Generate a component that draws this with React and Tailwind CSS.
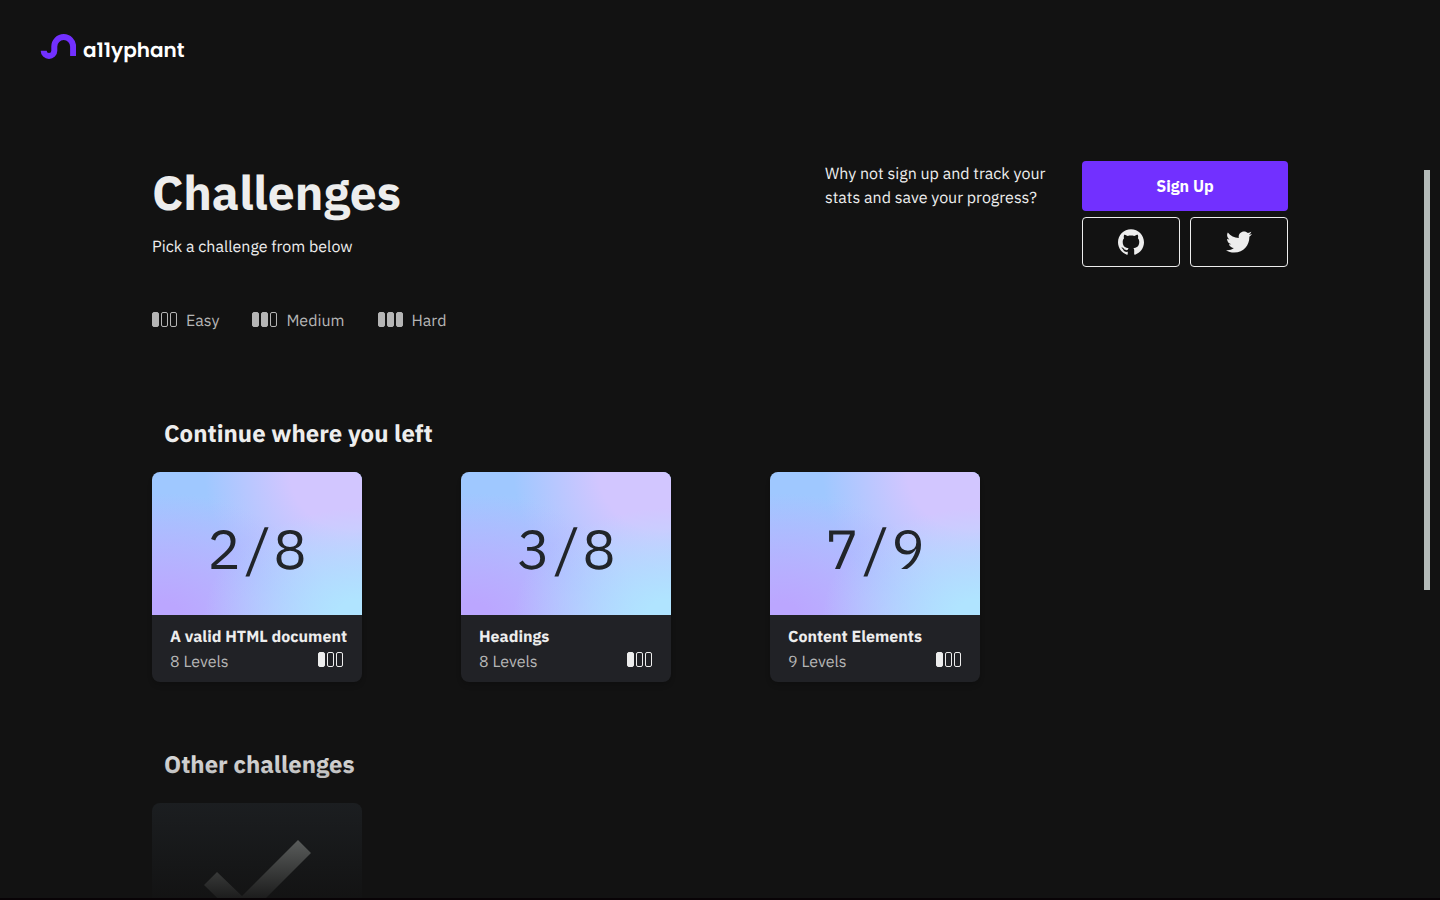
import { FaTwitter } from "react-icons/fa";
import { SiGithub } from "react-icons/si";

function Difficulty({ filled, label }) {
  return (
    <span role="img" aria-label={label} className="flex gap-0.5">
      {[0, 1, 2].map((i) => (
        <span
          key={i}
          className={
            i < filled
              ? "h-[15px] w-[7px] rounded-[2px] border border-current bg-current"
              : "h-[15px] w-[7px] rounded-[2px] border border-current"
          }
        />
      ))}
    </span>
  );
}

const legend = [
  { name: "Easy", filled: 1 },
  { name: "Medium", filled: 2 },
  { name: "Hard", filled: 3 },
];

const continued = [
  { title: "A valid HTML document", done: 2, levels: 8 },
  { title: "Headings", done: 3, levels: 8 },
  { title: "Content Elements", done: 7, levels: 9 },
];

const gradient =
  "bg-[radial-gradient(75%_75%_at_100%_100%,#b0e4ff_15%,#b0e4ff00_100%),radial-gradient(80%_85%_at_5%_100%,#bba6ff_10%,#bba6ff00_100%),radial-gradient(70%_95%_at_95%_0%,#d2c6ff_42%,#d2c6ff00_100%),linear-gradient(#9fc8ff_15%,#b5c5ff)]";

function Card({ title, done, levels }) {
  return (
    <a
      href="#challenge"
      className="flex h-[210px] flex-col overflow-hidden rounded-lg bg-[#212226] shadow-md"
    >
      <div className={`flex h-[143px] items-center justify-center pt-3 ${gradient}`}>
        <span className="font-['IBM_Plex_Mono','Liberation_Mono',monospace] text-[55px] leading-none text-[#212529]">
          {done}/{levels}
        </span>
      </div>
      <div className="px-[18px] pt-2.5">
        <h3 className="text-base leading-6 font-bold whitespace-nowrap">{title}</h3>
        <div className="flex items-center justify-between">
          <p className="text-base leading-[26px] text-[#b5b5b5]">{levels} Levels</p>
          <div className="pr-px pb-1.5">
            <Difficulty filled={1} label="Easy" />
          </div>
        </div>
      </div>
    </a>
  );
}

export default function App() {
  return (
    <div className="relative h-screen overflow-hidden bg-[#121212] font-['IBM_Plex_Sans','Noto_Sans',sans-serif] text-base text-[#ededed] antialiased [text-rendering:geometricPrecision]">
      <header className="flex h-24 items-center px-10">
        <a href="#home" className="flex items-start gap-[7px] text-white">
          <svg viewBox="0 0 36 28" className="h-7 w-9" fill="none" aria-hidden="true">
            <path
              d="M3.700 16.700a5.300 5.300 0 0 0 10.600 0v-4.200a9.400 9.400 0 0 1 18.800 0V22"
              stroke="#7230ff"
              strokeWidth="6"
            />
          </svg>
          <span className="pt-1 font-[Poppins,Outfit,Lato,sans-serif] text-[20px] leading-6 font-semibold">
            a11yphant
          </span>
        </a>
      </header>

      <main className="px-[152px] pt-[65px]">
        <div className="flex justify-between">
          <div>
            <h1 className="text-5xl leading-16 font-bold">Challenges</h1>
            <p className="mt-2.5 leading-6">Pick a challenge from below</p>
          </div>
          <div className="flex gap-[37px]">
            <p className="w-[220px] pt-px leading-6 whitespace-nowrap">
              Why not sign up and track your
              <br />
              stats and save your progress?
            </p>
            <div className="grid w-[206px] grid-cols-2 gap-x-2.5 gap-y-1.5">
              <button className="col-span-2 h-[50px] rounded bg-[#7230ff] font-bold text-white">
                Sign Up
              </button>
              <button
                aria-label="Sign up with GitHub"
                className="flex h-[50px] items-center justify-center rounded border border-[#ededed]"
              >
                <SiGithub size={26} />
              </button>
              <button
                aria-label="Sign up with Twitter"
                className="flex h-[50px] items-center justify-center rounded border border-[#ededed]"
              >
                <FaTwitter size={26} />
              </button>
            </div>
          </div>
        </div>

        <ul className="mt-[41px] flex gap-[33px] text-[#b5b5b5]">
          {legend.map((l) => (
            <li key={l.name} className="flex items-start gap-[9px]">
              <div className="pt-1">
                <Difficulty filled={l.filled} label="" />
              </div>
              <span className="pt-px leading-6">{l.name}</span>
            </li>
          ))}
        </ul>

        <section className="mt-[84px]">
          <h2 className="px-3 text-2xl leading-8 font-bold">Continue where you left</h2>
          <div className="mt-[23px] grid grid-cols-[repeat(4,210px)] gap-x-[99px]">
            {continued.map((c) => (
              <Card key={c.title} {...c} />
            ))}
          </div>
        </section>

        <section className="mt-[66px]">
          <h2 className="px-3 text-2xl leading-8 font-bold">Other challenges</h2>
          <div className="mt-[23px] grid grid-cols-[repeat(4,210px)] gap-x-[99px]">
            <a
              href="#challenge"
              aria-label="Completed challenge"
              className="flex h-[210px] flex-col items-center rounded-lg bg-[#212529] pt-[37px] pl-0.5"
            >
              <svg viewBox="0 0 108 82" className="h-[82px] w-[108px]" aria-hidden="true">
                <path d="M0 45 13 32 38 56 94 0 107 13 38 82Z" fill="#c4cac8" />
              </svg>
            </a>
          </div>
        </section>
      </main>

      <div className="pointer-events-none absolute inset-x-0 bottom-0 h-40 bg-[linear-gradient(#12121200,#121212_105%)]" />
      <div className="absolute top-[170px] right-2.5 h-[420px] w-1.5 bg-[#b5bbb9]" />
      <div className="absolute inset-x-0 bottom-0 h-0.5 bg-[#080306]" />
    </div>
  );
}
